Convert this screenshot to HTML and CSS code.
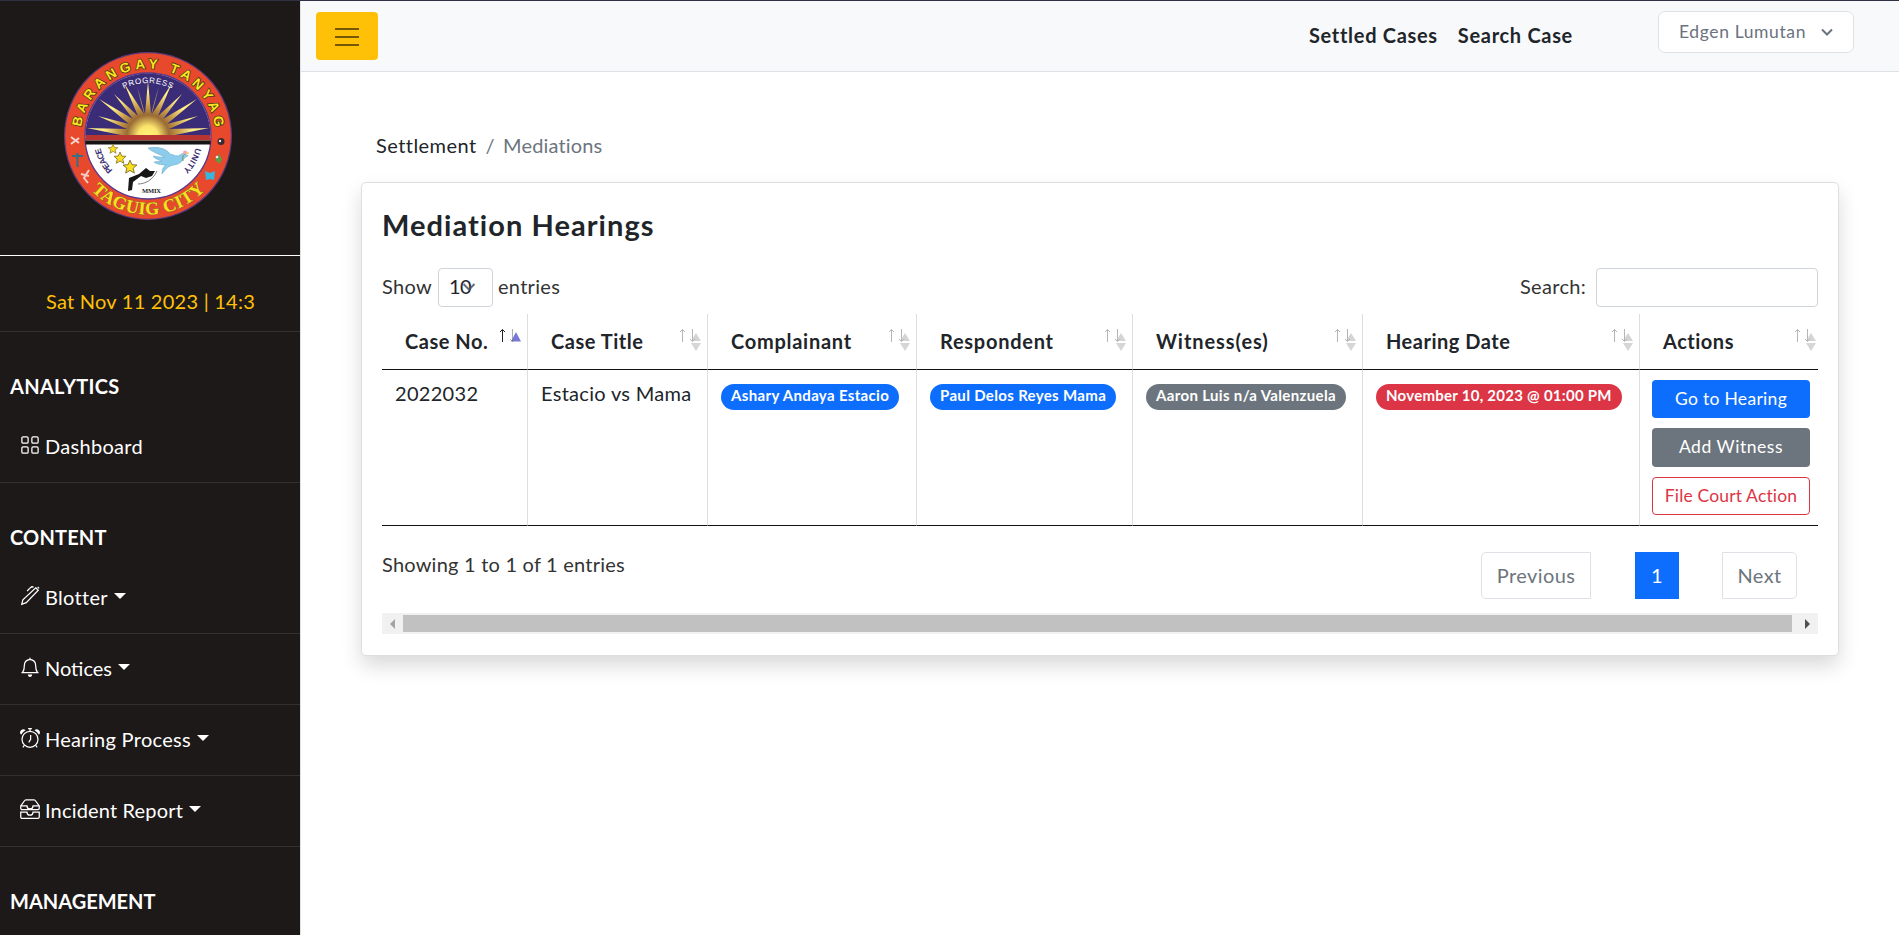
FILE: index.html
```html
<!DOCTYPE html>
<html lang="en">
<head>
<meta charset="utf-8">
<title>Mediation Hearings</title>
<link rel="stylesheet" href="styles.css">
</head>
<body>
<svg class="defs" width="0" height="0" aria-hidden="true">
  <symbol id="sort" viewBox="0 0 25 26">
    <g fill="none" stroke="#b5b5b5" stroke-width="1"><path d="M4.5 15V2.5M2 5l2.500-2.500L7 5M14.500 2v12.500M12 12l2.500 2.500L17 12"/></g>
    <path d="M18 6l5 8H13z" fill="#b8b8b8" fill-opacity=".6"/><path d="M18 24l5-8H13z" fill="#d6d6d6"/>
  </symbol>
  <symbol id="sort-asc" viewBox="0 0 25 26">
    <path d="M18 5l5 9.500H13z" fill="#7878da"/>
    <path d="M4.500 15V2.500M2 5l2.500-2.500L7 5" fill="none" stroke="#212529"/>
    <path d="M14.500 2v12.500M12 12l2.500 2.500L17 12" fill="none" stroke="#777" stroke-opacity=".6"/>
  </symbol>
</svg>
<div class="app">
  <aside class="sidebar">
    <div class="brand">
      <svg class="seal" viewBox="-84 -84 168 168">
        <defs>
          <path id="arc-name" d="M-67.500 0A67.500 67.500 0 1 1 67.500 0"/>
          <path id="arc-city" d="M-78.500 0A78.500 78.500 0 0 0 78.500 0"/>
          <path id="arc-motto" d="M-53 0A53 53 0 0 1 53 0"/>
          <path id="arc-peace" d="M0 49A49 49 0 0 1-49 0"/>
          <path id="arc-unity" d="M49 0A49 49 0 0 1 0 49"/>
          <clipPath id="upper"><path d="M-62 0A62 62 0 0 1 62 0z"/></clipPath>
          <radialGradient id="glow" gradientUnits="userSpaceOnUse" cx="0" cy="0" r="62"><stop offset="0" stop-color="#fff27a"/><stop offset=".16" stop-color="#fbe46c"/><stop offset=".34" stop-color="#9a6b35"/><stop offset=".5" stop-color="#c89f4c"/><stop offset=".72" stop-color="#fff08a"/><stop offset="1" stop-color="#f0dc7a"/></radialGradient>
          <path id="star" d="M0-6l1.700 4 4.300.3-3.300 2.800 1.100 4.200L0 3l-3.800 2.300 1.100-4.200L-6-1.700l4.300-.3z"/>
        </defs>
        <circle r="83.400" fill="#e8492c" stroke="#5b3a7c" stroke-width="1.200"/>
        <circle r="63" fill="#fff" stroke="#5a3b8c" stroke-width="1.300"/>
        <path d="M-62.500 0A62.500 62.500 0 0 1 62.500 0z" fill="#3b2c77"/>
        <g fill="url(#glow)" clip-path="url(#upper)">
          <path d="M-22 0L-61-8-21-7-50-20-19-12-49-37-15-17-34-42-10-20-24-53-4-22-11-50-3-22 0-55 3-22 11-50 4-22 24-53 10-20 34-42 15-17 49-37 19-12 50-20 21-7 61-8 22 0z"/>
          <circle r="22"/>
        </g>
        <path d="M-62.500-1h125v5.500h-125z" fill="#b73530"/><path d="M-62.500 4.500h125V8.500h-125z" fill="#151313"/>
        <g class="seal-name"><text><textPath href="#arc-name" startOffset="9" textLength="194">BARANGAY TANYAG</textPath></text></g>
        <text class="seal-city"><textPath href="#arc-city" startOffset="60" textLength="127">TAGUIG CITY</textPath></text>
        <text class="seal-motto"><textPath href="#arc-motto" startOffset="58" textLength="50">PROGRESS</textPath></text>
        <text class="seal-side"><textPath href="#arc-peace" startOffset="39" textLength="26">PEACE</textPath></text>
        <text class="seal-side"><textPath href="#arc-unity" startOffset="12" textLength="26">UNITY</textPath></text>
        <g fill="#f9e11d" stroke="#7e6b2a" stroke-width=".8"><use href="#star" transform="translate(-35 13) scale(.8)"/><use href="#star" transform="translate(-28 22)"/><use href="#star" transform="translate(-18 31) scale(1.150)"/></g>
        <path d="M0 12c10-2 19 1 22 6 5 1 7 3 10 1 3-3 7-1 8 1-5 1-5 8-14 9-6 1-8 4-12 9 0-5 1-7 4-9-5 0-10-1-12-3l8-1c-4-1-8-3-9-5 4 1 8 1 12 1-6-3-13-5-17-9z" fill="#8cccec" stroke="#69a4c0" stroke-width=".5"/>
        <path d="M35 25c-1-4 0-5 2-7" fill="none" stroke="#689b48"/><circle cx="37" cy="16.500" r="2" fill="#f7a2c0"/><circle cx="39.500" cy="17" r="1.300" fill="#f3d86b"/>
        <path d="M-19 42l10-4 7-6 4 3 5 0-3 5-6 2-5-2-8 6-1 8-4 1z" fill="#171717"/><path d="M-10 48c7 0 15-4 19-13" fill="none" stroke="#444" stroke-width=".7"/>
        <text class="seal-year" x="3.500" y="57" textLength="19">MMIX</text>
        <g fill="none" stroke-width="2"><path d="M-77 1l8 6m-8 1l8-6" stroke="#f3d5d0"/><path d="M-76 20h11m-5.500-3v14" stroke="#347184"/><path d="M-59 34l-5 8 4 5m-7-9l8 2" stroke="#f7cdc6"/></g>
        <circle cx="73" cy="5.500" r="3.500" fill="#392a30"/><circle cx="72" cy="5" r="1.200" fill="#eee"/>
        <path d="M67 24l4-6 3 5-2 5z" fill="#5c9b48"/><circle cx="69" cy="21" r="1.300" fill="#eee"/>
        <path d="M57 35l5 2 5-2-1 9-4-1-4 1z" fill="#39b5dc"/>
      </svg>
    </div>
    <div class="clock">Sat Nov 11 2023 | 14:3</div>
    <div class="group">ANALYTICS</div>
    <a class="item"><svg viewBox="0 0 16 16"><path d="M1.500 2.500a1 1 0 0 1 1-1h3a1 1 0 0 1 1 1v3a1 1 0 0 1-1 1h-3a1 1 0 0 1-1-1zM9.500 2.500a1 1 0 0 1 1-1h3a1 1 0 0 1 1 1v3a1 1 0 0 1-1 1h-3a1 1 0 0 1-1-1zM1.500 10.500a1 1 0 0 1 1-1h3a1 1 0 0 1 1 1v3a1 1 0 0 1-1 1h-3a1 1 0 0 1-1-1zM9.500 10.500a1 1 0 0 1 1-1h3a1 1 0 0 1 1 1v3a1 1 0 0 1-1 1h-3a1 1 0 0 1-1-1z"/></svg><span>Dashboard</span></a>
    <div class="group tight">CONTENT</div>
    <a class="item"><svg viewBox="0 0 16 16"><path d="M12.600 1.400l2 2-9.600 9.900-3.600 1.300L2.300 11zM14.100.7l1.200 1.200M10.800 1.100c-.8-.8-1.700-.5-2.400.2L5.700 4"/></svg><span>Blotter</span><i class="caret"></i></a>
    <a class="item"><svg viewBox="0 0 16 16"><path d="M8 1.900c-2.500.4-4.500 2.100-4.500 4.600 0 2.500-.4 4.500-1.500 6h12c-1.100-1.500-1.500-3.500-1.500-6C12.500 4 10.500 2.300 8 1.900zM1.200 12.500h13.600M8 .5v1.400"/><path class="solid" d="M6.300 14h3.400c0 1-.7 2-1.700 2s-1.700-1-1.700-2z"/></svg><span class="close">Notices</span><i class="caret"></i></a>
    <a class="item"><svg viewBox="0 0 16 16"><circle cx="8" cy="9" r="6.400"/><path d="M8.500 5.500V9L7 11.500M6.500.5h3M8 .5v2M3.600 13.600L2.300 15.500M12.400 13.600l1.300 1.900"/><path class="solid" d="M.9 5.400A2.500 2.500 0 1 1 4.400 1.800 8 8 0 0 0 .9 5.400zM15.100 5.400a2.500 2.500 0 1 0-3.500-3.600 8 8 0 0 1 3.500 3.600z"/></svg><span>Hearing Process</span><i class="caret"></i></a>
    <a class="item"><svg viewBox="0 0 16 16"><path d="M.6 5.500l3-4.100a2 2 0 0 1 1.500-.8h5.800a2 2 0 0 1 1.500.8l3 4.100v1.900a1.100 1.100 0 0 1-1.100 1.100H1.700A1.100 1.100 0 0 1 .6 7.400zM.6 5.500h5c0 1.300 1.100 2.400 2.400 2.400s2.400-1.100 2.400-2.400h5M.6 10.500h5c0 1.300 1.100 2.400 2.400 2.400s2.400-1.100 2.400-2.400h5v3.900a1.100 1.100 0 0 1-1.100 1.100H1.700a1.100 1.100 0 0 1-1.100-1.100z"/></svg><span class="tight">Incident Report</span><i class="caret"></i></a>
    <div class="group close">MANAGEMENT</div>
  </aside>
  <div class="content">
    <header class="topbar">
      <button class="menu"><svg viewBox="0 0 26 20"><path d="M1 2h24M1 10h24M1 18h24"/></svg></button>
      <nav class="links"><a>Settled Cases</a><a>Search Case</a></nav>
      <div class="user">Edgen Lumutan<svg viewBox="0 0 12 8"><path d="M1 1.500l5 5 5-5"/></svg></div>
    </header>
    <main class="page">
      <div class="crumbs"><a>Settlement</a><span>/</span><b>Mediations</b></div>
      <section class="card">
        <h1>Mediation Hearings</h1>
        <div class="controls">
          <span>Show</span><div class="select">10<svg viewBox="0 0 14 10"><path d="M1.500 2L7 7.500 12.500 2"/></svg></div><span>entries</span>
          <label for="q">Search:</label><input id="q" class="search">
        </div>
        <table>
          <colgroup><col class="c1"><col class="c2"><col class="c3"><col class="c4"><col class="c5"><col class="c6"><col class="c7"></colgroup>
          <thead><tr>
            <th>Case No.<svg><use href="#sort-asc"/></svg></th>
            <th>Case Title<svg><use href="#sort"/></svg></th>
            <th class="wide">Complainant<svg><use href="#sort"/></svg></th>
            <th class="wide">Respondent<svg><use href="#sort"/></svg></th>
            <th class="wider">Witness(es)<svg><use href="#sort"/></svg></th>
            <th>Hearing Date<svg><use href="#sort"/></svg></th>
            <th>Actions<svg><use href="#sort"/></svg></th>
          </tr></thead>
          <tbody><tr>
            <td>2022032</td>
            <td>Estacio vs Mama</td>
            <td><span class="badge blue">Ashary Andaya Estacio</span></td>
            <td><span class="badge blue">Paul Delos Reyes Mama</span></td>
            <td><span class="badge gray">Aaron Luis n/a Valenzuela</span></td>
            <td><span class="badge red">November 10, 2023 @ 01:00 PM</span></td>
            <td class="actions"><a class="btn blue">Go to Hearing</a><a class="btn gray add">Add Witness</a><a class="btn outline">File Court Action</a></td>
          </tr></tbody>
        </table>
        <div class="foot">
          <span>Showing 1 to 1 of 1 entries</span>
          <div class="pages"><a class="prev">Previous</a><a class="current">1</a><a class="next">Next</a></div>
        </div>
        <div class="scroll"><i class="left"></i><div class="thumb"></div><i class="right"></i></div>
      </section>
    </main>
  </div>
</div>
</body>
</html>
```
FILE: styles.css
```css
* { box-sizing: border-box; }
body {
  margin: 0;
  height: 935px;
  overflow: hidden;
  border-top: 1px solid #2f3142;
  background: #fff;
  color: #212529;
  font: 20px/30px Lato, "Liberation Sans", sans-serif;
  letter-spacing: .3px;
}
.defs { position: absolute; }
.app { display: flex; height: 934px; }
svg { flex: none; }

.sidebar {
  width: 301px;
  flex: none;
  background: #1d1918;
  border-right: 1px solid #dee2e6;
  color: #fff;
  overflow: hidden;
}
.brand {
  height: 255px;
  padding: 51px 0 0 64px;
  border-bottom: 1px solid #fff;
}
.seal { display: block; width: 168px; height: 168px; }
.seal text { letter-spacing: 0; font-family: "Liberation Sans", sans-serif; font-weight: 700; }
.seal .seal-name text { font-size: 13.5px; fill: #fbe51f; stroke: #4d3d12; stroke-width: 1.6px; paint-order: stroke; }
.seal .seal-city { font-family: "Liberation Serif", serif; font-size: 18px; fill: #f9e11d; stroke: #836e2b; stroke-width: .8px; paint-order: stroke; }
.seal .seal-motto { font-size: 8px; font-weight: 400; fill: #fff; }
.seal .seal-side { font-size: 8.5px; fill: #3a2d70; }
.seal .seal-year { font-family: "Liberation Serif", serif; font-size: 6.5px; fill: #222; text-anchor: middle; }
.clock {
  height: 76px;
  padding: 30px 0 0 46px;
  border-bottom: 1px solid #343030;
  color: #ffc107;
  letter-spacing: .25px;
}
.group { height: 80px; padding: 39px 0 0 10px; font-weight: 700; }
.tight { letter-spacing: .17px; }
.close { letter-spacing: 0; }
.item {
  display: flex;
  align-items: center;
  height: 71px;
  padding: 0 0 4px 20px;
  border-bottom: 1px solid #343030;
}
.item svg { width: 20px; height: 20px; margin-right: 5px; fill: none; stroke: #fff; stroke-width: 1; }
.item span { padding-top: 1px; }
.item .solid { fill: #fff; stroke: none; }
.caret { margin-left: 6px; border: 6px solid transparent; border-top-color: #fff; border-bottom: 0; }

.content { flex: 1; min-width: 0; }
.topbar {
  display: flex;
  align-items: flex-start;
  height: 71px;
  padding: 0 45px 0 15px;
  background: #f8f9fb;
  border-bottom: 1px solid #dee2e6;
}
.menu {
  width: 62px;
  height: 48px;
  margin-top: 11px;
  padding: 0;
  border: 0;
  border-radius: 4px;
  background: #ffc107;
}
.menu svg { display: block; width: 26px; height: 20px; margin: 1px auto 0; fill: none; stroke: #735808; stroke-width: 2; }
.links { display: flex; gap: 20px; margin: 19px 85px 0 auto; font-weight: 700; letter-spacing: .69px; }
.user {
  display: flex;
  align-items: center;
  width: 196px;
  height: 42px;
  margin-top: 10px;
  padding: 0 20px 0 20px;
  border: 1px solid #dee2e6;
  border-radius: 7px;
  background: #fff;
  color: #6b7280;
  font-size: 17.5px;
  letter-spacing: .61px;
}
.user svg { width: 12px; height: 8px; margin-left: auto; fill: none; stroke: #6b7280; stroke-width: 2; }

.page { padding: 58px 60px 0 60px; }
.crumbs { display: flex; gap: 9px; padding-left: 15px; letter-spacing: .45px; }
.crumbs span { color: #6c757d; }
.crumbs b { margin-left: -1px; font-weight: 400; letter-spacing: .14px; color: #6c757d; }
.card {
  height: 474px;
  margin-top: 22px;
  padding: 24px 20px 0;
  border: 1px solid #dfdfdf;
  border-radius: 5px;
  background: #fff;
  box-shadow: 0 10px 20px rgba(0, 0, 0, .15);
}
h1 { margin: 0 0 26px; font-size: 29px; line-height: 35px; font-weight: 700; letter-spacing: 1.05px; }
.controls { display: flex; height: 46px; color: #333; }
.controls > span, .controls label { padding-top: 3px; }
.select {
  position: relative;
  width: 55px;
  height: 39px;
  margin: 0 5px 0 6px;
  padding: 2px 0 0 10px;
  border: 1px solid #ced4da;
  border-radius: 4px;
  color: #212529;
  letter-spacing: -.6px;
}
.select svg { position: absolute; left: 23px; top: 13px; width: 14px; height: 10px; fill: none; stroke: #4b5563; stroke-opacity: .85; stroke-width: 2; }
.controls label { margin-left: auto; }
.search { width: 222px; height: 39px; margin-left: 10px; border: 1px solid #ced4da; border-radius: 4px; background: #fff; }

table { width: 1436px; table-layout: fixed; border-collapse: separate; border-spacing: 0; }
.c1 { width: 146px; }
.c2 { width: 180px; }
.c3 { width: 209px; }
.c4 { width: 216px; }
.c5 { width: 230px; }
.c6 { width: 277px; }
.c7 { width: 178px; }
th, td { border-right: 1px solid #dcdee2; border-bottom: 1px solid #111; text-align: left; vertical-align: top; white-space: nowrap; }
th { position: relative; height: 56px; padding: 12px 0 0 23px; letter-spacing: .52px; }
th.wide { letter-spacing: .73px; }
th.wider { letter-spacing: .94px; }
th svg { position: absolute; right: 4px; top: 13px; width: 25px; height: 26px; }
td { height: 156px; padding: 8px 0 0 13px; }
th:last-child, td:last-child { border-right: 0; }
th:last-child svg { right: 0; }
.badge {
  display: block;
  width: fit-content;
  height: 26px;
  margin-top: 6px;
  padding: 0 10px;
  border-radius: 13px;
  color: #fff;
  font-size: 15px;
  line-height: 22px;
  font-weight: 700;
  letter-spacing: .34px;
}
.blue { background: #0d6efd; }
.gray { background: #6c757d; }
.red { background: #dc3545; letter-spacing: .26px; }
.actions { padding: 10px 8px 0 12px; }
.btn {
  display: block;
  height: 38.4px;
  margin-bottom: 10px;
  border-radius: 4px;
  color: #fff;
  font-size: 17.5px;
  line-height: 37px;
  text-align: center;
}
.btn.add { letter-spacing: .55px; }
.btn.outline { margin: 0; border: 1px solid #dc3545; color: #dc3545; line-height: 35px; letter-spacing: .15px; }

.foot { display: flex; justify-content: space-between; height: 87px; padding: 23px 21px 0 0; color: #333; letter-spacing: .22px; }
.pages { display: flex; margin-top: 3px; height: 47px; color: #6c757d; letter-spacing: .4px; }
.pages a { border: 1px solid #dee2e6; line-height: 44px; text-align: center; }
.pages .prev { width: 110px; border-radius: 5px 0 0 5px; }
.pages .current { width: 44px; margin: 0 43px 0 44px; background: #0d6efd; border-color: #0d6efd; color: #fff; }
.pages .next { width: 75px; border-radius: 0 5px 5px 0; }
.scroll { display: flex; align-items: center; justify-content: space-between; height: 21px; padding: 0 8px; background: #f1f1f1; }
.thumb { flex: 1; height: 17px; margin: 0 18px 0 8px; background: #c1c1c1; }
.left, .right { border: 5px solid transparent; }
.left { border-right-color: #a3a3a3; border-left: 0; }
.right { margin-left: -5px; border-left-color: #505050; border-right: 0; }
```
